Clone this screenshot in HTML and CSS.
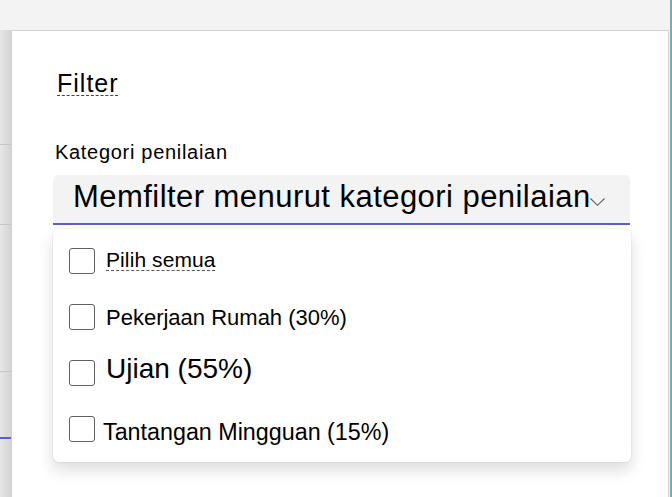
FILE: index.html
```html
<!DOCTYPE html>
<html lang="id">
<head>
<meta charset="utf-8">
<title>Filter</title>
<link rel="stylesheet" href="styles.css">
</head>
<body>
<div class="app">
  <div class="topbar"></div>
  <div class="edge"></div>
  <div class="side">
    <div class="side-seg s1"></div>
    <div class="side-seg s2"></div>
    <div class="side-seg s3"></div>
    <div class="side-seg s4"></div>
    <div class="side-accent"></div>
  </div>
  <div class="panel">
    <h1 class="title">Filter</h1>
    <div class="label">Kategori penilaian</div>
    <div class="dropdown">
      <span class="dropdown-text">Memfilter menurut kategori penilaian</span>
      <svg class="chevron" width="15" height="8" viewBox="0 0 15 8"><path d="M0.5 0.5 L7.5 7.3 L14.5 0.5" fill="none" stroke="#616161" stroke-width="1.1"/></svg>
    </div>
    <div class="listbox">
      <div class="option"><span class="box"></span><span class="opt-text t1">Pilih semua</span></div>
      <div class="option"><span class="box"></span><span class="opt-text t2">Pekerjaan Rumah (30%)</span></div>
      <div class="option"><span class="box"></span><span class="opt-text t3">Ujian (55%)</span></div>
      <div class="option"><span class="box"></span><span class="opt-text t4">Tantangan Mingguan (15%)</span></div>
    </div>
  </div>
</div>
</body>
</html>
```
FILE: styles.css
```css
html, body {
  margin: 0;
  padding: 0;
}
body {
  width: 672px;
  height: 497px;
  overflow: hidden;
  background: #f3f3f3;
  font-family: "Liberation Sans", Arial, sans-serif;
  color: #000;
}
.app {
  display: grid;
  grid-template-columns: 11px 659px 2px;
  grid-template-rows: 30px 467px;
  height: 497px;
}
.topbar {
  grid-column: 1 / 3;
  grid-row: 1;
  background: #f3f3f3;
}
.edge {
  grid-column: 3;
  grid-row: 1 / 3;
  background: #5fb8b4;
}
.side {
  grid-column: 1;
  grid-row: 2;
  display: flex;
  flex-direction: column;
  background: linear-gradient(to right, #e6e6e6, #d3d3d3);
}
.side-seg {
  border-bottom: 1px solid #c6c6c6;
  flex: none;
}
.s1 { height: 114px; }
.s2 { height: 79px; }
.s3 { height: 146px; }
.s4 { height: 65px; border-bottom: none; }
.side-accent {
  height: 2px;
  background: #5b5fc7;
}
.panel {
  grid-column: 2;
  grid-row: 2;
  background: #fff;
  border: 1px solid #d1d1d1;
  border-bottom: none;
  margin-right: 1px;
  padding: 40px 37px 0 41px;
  box-sizing: border-box;
}
.title {
  margin: 0;
  font-size: 25px;
  line-height: 1;
  font-weight: 400;
  letter-spacing: 1px;
  padding-left: 4px;
  text-decoration: underline dashed #444 1px;
  text-underline-offset: 3px;
}
.label {
  margin-top: 46px;
  font-size: 20px;
  line-height: 1;
  letter-spacing: 0.7px;
  padding-left: 2px;
}
.dropdown {
  margin-top: 13px;
  margin-right: 1px;
  height: 50px;
  box-sizing: border-box;
  background: #f3f3f3;
  border-radius: 5px 5px 0 0;
  border-bottom: 2px solid #5b5fc7;
  display: flex;
  align-items: flex-start;
  padding: 6px 25px 0 20px;
}
.dropdown-text {
  flex: 1;
  min-width: 0;
  white-space: nowrap;
  font-size: 31px;
  line-height: 1;
  letter-spacing: 0.45px;
}
.chevron {
  flex: none;
  margin-top: 17px;
}
.listbox {
  margin-top: 4px;
  height: 233px;
  box-sizing: border-box;
  background: #fff;
  border-radius: 6px;
  box-shadow: 0 0 2px rgba(0,0,0,0.12), 0 8px 16px rgba(0,0,0,0.14);
  padding: 4px 16px 5px 16px;
  display: flex;
  flex-direction: column;
}
.option {
  height: 56px;
  display: flex;
  align-items: flex-start;
}
.box {
  flex: none;
  width: 26px;
  height: 26px;
  box-sizing: border-box;
  border: 1px solid #616161;
  border-radius: 3px;
  margin-top: 15px;
}
.opt-text {
  line-height: 1;
  white-space: nowrap;
}
.t1 {
  font-size: 21px;
  margin: 16px 0 0 11px;
  letter-spacing: 0.1px;
  text-decoration: underline dashed #555 1px;
  text-underline-offset: 3px;
}
.t2 { font-size: 22px; margin: 18px 0 0 11px; }
.t3 { font-size: 28px; margin: 10px 0 0 11px; }
.t4 { font-size: 23.3px; margin: 20px 0 0 8px; }
```
